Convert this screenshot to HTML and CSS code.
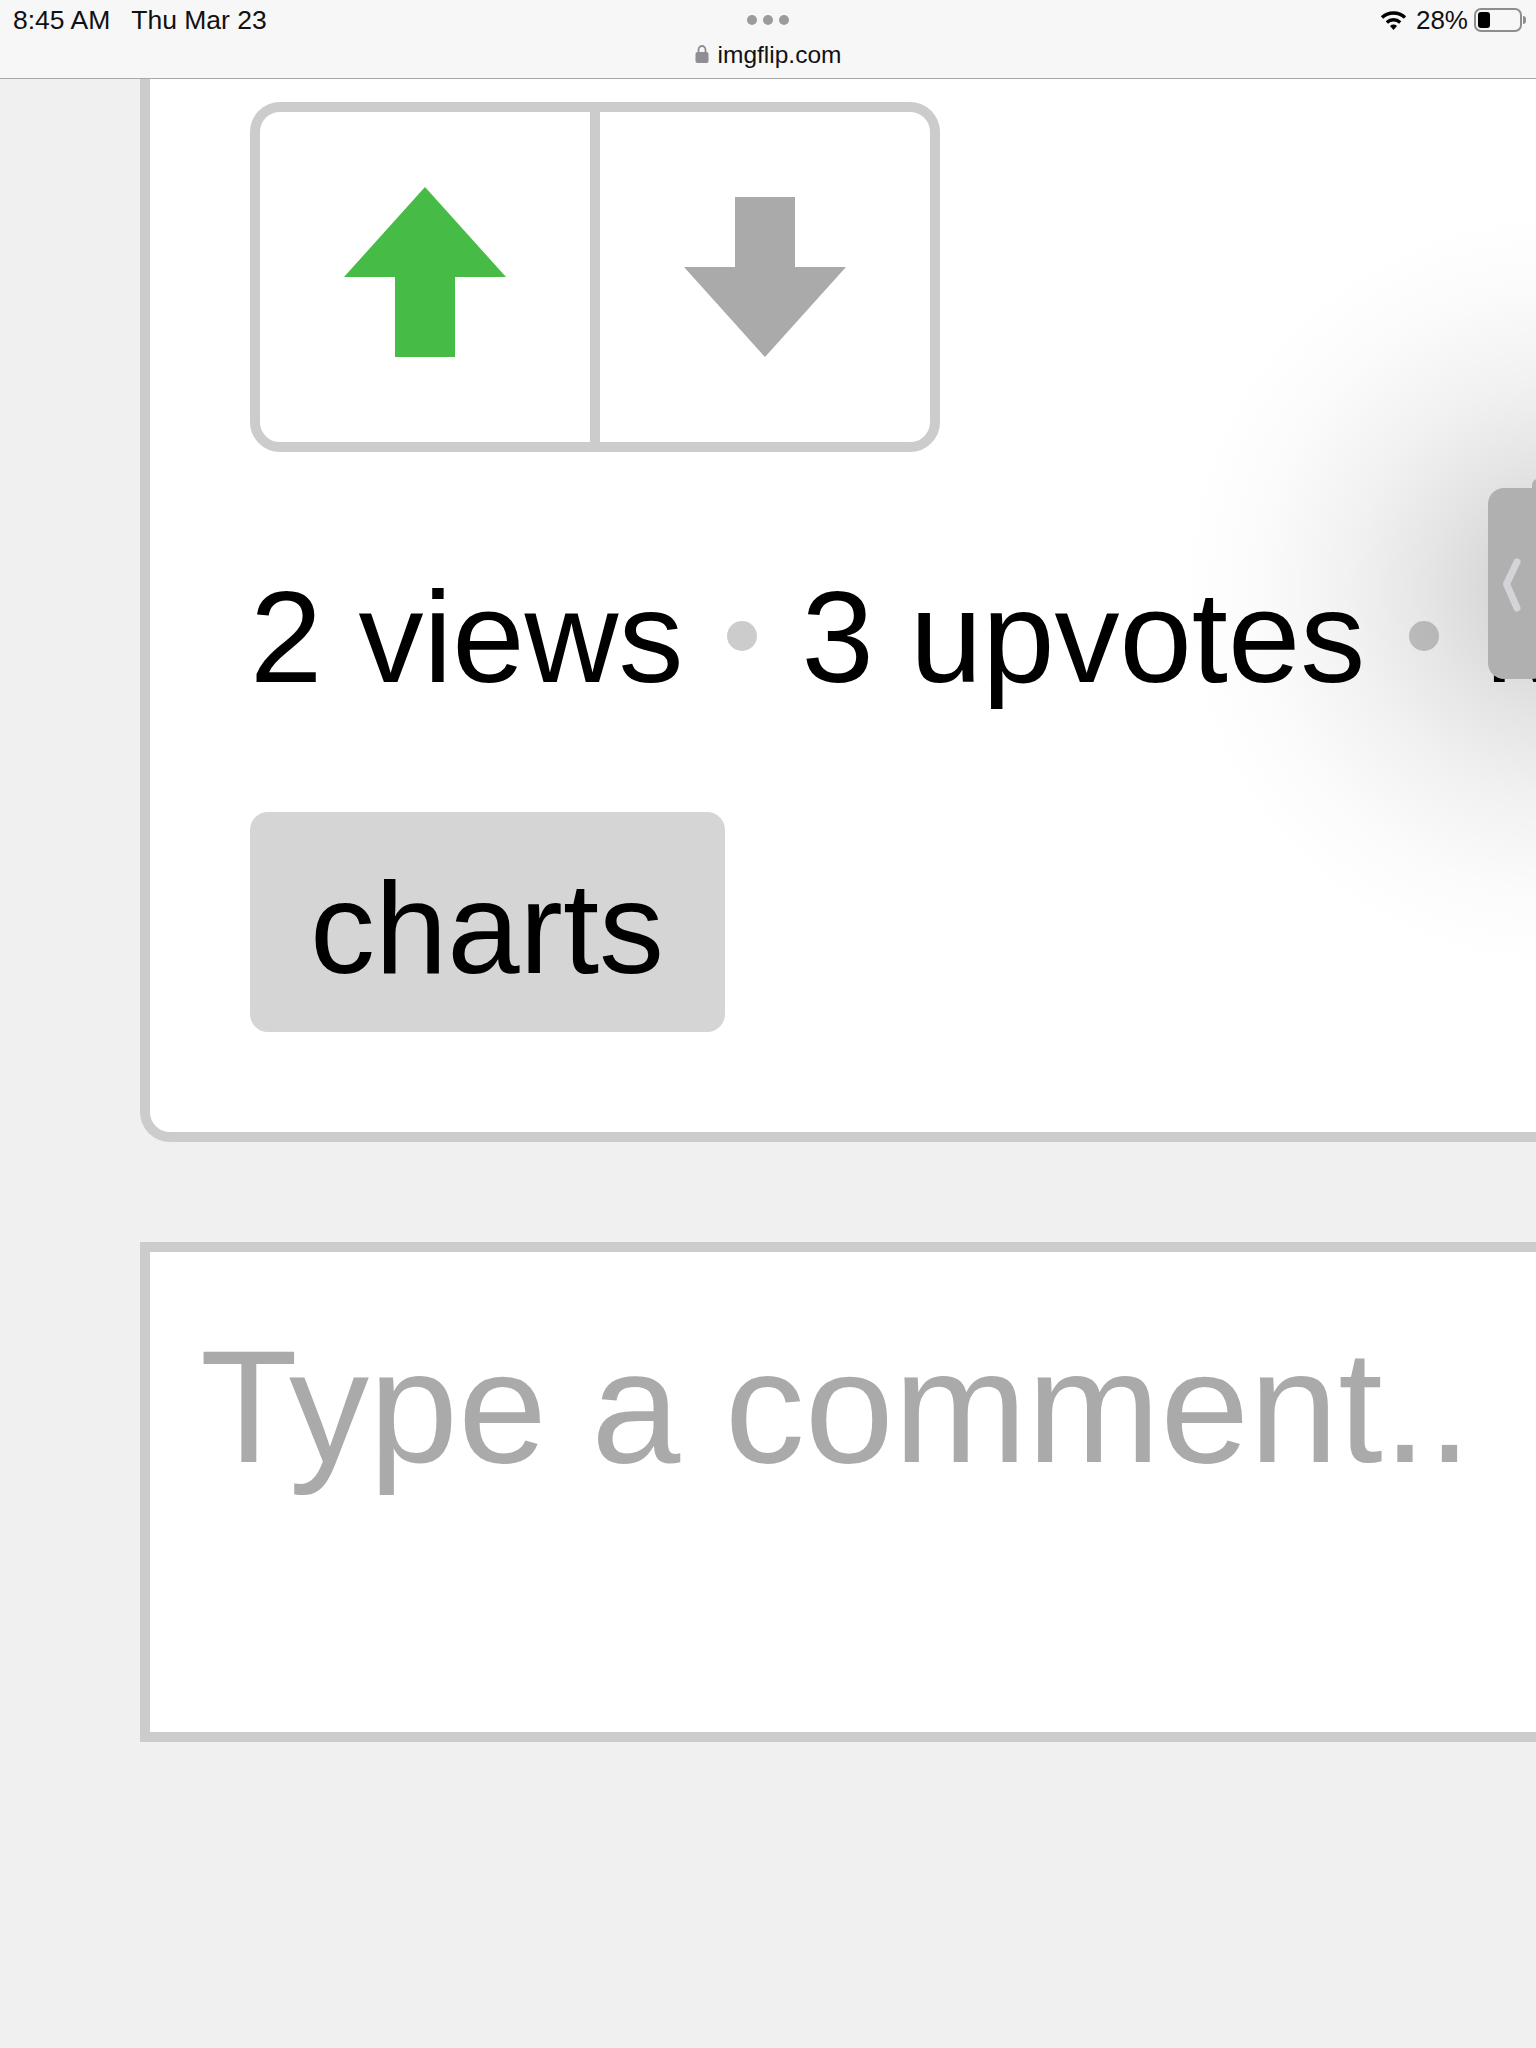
FILE: index.html
```html
<!DOCTYPE html>
<html lang="en">
<head>
    <meta charset="UTF-8">
    <title>imgflip.com</title>
    <link rel="stylesheet" href="styles.css">
</head>
<body>
    <div class="status-bar">
        <div class="status-row">
            <div class="status-time"><span>8:45 AM</span><span>Thu Mar 23</span></div>
            <div class="status-dots"><i></i><i></i><i></i></div>
            <div class="status-right">
                <svg class="wifi" width="27" height="20" viewBox="0 0 27 20">
                    <path d="M2 7.500a17 17 0 0 1 23 0" fill="none" stroke="#000" stroke-width="3.400"/>
                    <path d="M6.800 12.400a10 10 0 0 1 13.400 0" fill="none" stroke="#000" stroke-width="3.400"/>
                    <path d="M10 16a5.500 5.500 0 0 1 7 0l-3.500 4z"/>
                </svg>
                <span>28%</span>
                <div class="battery"><div class="battery-level"></div></div>
                <div class="battery-tip"></div>
            </div>
        </div>
        <div class="url-row">
            <svg class="lock" width="14" height="18" viewBox="0 0 14 18">
                <path d="M3.500 8V4.500a3.500 3.500 0 0 1 7 0V8" fill="none" stroke="#8e8e93" stroke-width="1.800"/>
                <rect x="0.500" y="7" width="13" height="11" rx="2" fill="#8e8e93"/>
            </svg>
            <span>imgflip.com</span>
        </div>
    </div>

    <div class="page">
        <section class="card">
            <div class="vote-box">
                <button class="vote-btn vote-up">
                    <svg width="162" height="170" viewBox="0 0 162 170"><polygon points="81,0 162,90 111,90 111,170 51,170 51,90 0,90"/></svg>
                </button>
                <button class="vote-btn vote-down">
                    <svg width="162" height="170" viewBox="0 0 162 170"><polygon points="51,10 111,10 111,80 162,80 81,170 0,80 51,80"/></svg>
                </button>
            </div>
            <div class="stats">
                <span>2 views</span><i class="dot"></i><span>3 upvotes</span><i class="dot"></i><span>Made by</span>
            </div>
            <div class="tags"><a class="tag">charts</a></div>
        </section>

        <div class="comment-box">Type a comment..</div>
    </div>

    <div class="side-glow"></div>
    <div class="side-handle">
        <svg width="20" height="58" viewBox="0 0 20 58"><path d="M15 6L4.500 28 15 52" fill="none" stroke="#d4d4d8" stroke-width="7" stroke-linecap="round" stroke-linejoin="round"/></svg>
    </div>
</body>
</html>
```

FILE: styles.css
```css
html, body {
    margin: 0;
    padding: 0;
}
body {
    width: 1536px;
    height: 2048px;
    overflow: hidden;
    position: relative;
    background-color: #f0f0f0;
    font-family: "Liberation Sans", Arial, sans-serif;
    color: #000;
}

/* ipad status bar + url */
.status-bar {
    position: relative;
    z-index: 2;
    height: 78px;
    background-color: #f7f7f7;
    border-bottom: 1px solid #a8a8a8;
    font-size: 26px;
    color: #111;
}
.status-row {
    height: 40px;
    padding: 0 0 0 13px;
    display: flex;
    align-items: center;
    justify-content: space-between;
}
.status-time {
    display: flex;
    gap: 21px;
    width: 487px;
    font-size: 26.500px;
}
.status-dots {
    display: flex;
    gap: 6px;
}
.status-dots i {
    width: 10px;
    height: 10px;
    border-radius: 50%;
    background-color: #9c9c9c;
}
.status-right {
    width: 500px;
    display: flex;
    align-items: center;
    justify-content: flex-end;
    gap: 6px;
    padding-right: 10px;
    box-sizing: border-box;
}
.wifi {
    margin-right: 3px;
}
.battery {
    width: 48px;
    height: 24px;
    box-sizing: border-box;
    border: 2px solid #8e8e8e;
    border-radius: 7px;
    padding: 2px;
}
.battery-level {
    width: 12px;
    height: 100%;
    background-color: #000;
    border-radius: 3px;
}
.battery-tip {
    width: 3px;
    height: 8px;
    margin-left: -5px;
    background-color: #8e8e8e;
    border-radius: 0 3px 3px 0;
}
.url-row {
    height: 30px;
    display: flex;
    align-items: center;
    justify-content: center;
    gap: 9px;
    font-size: 24.5px;
}
.lock {
    margin-top: -2px;
}

.page {
    padding-left: 140px;
}

.card {
    margin-top: -50px;
    box-sizing: border-box;
    background-color: #fff;
    border: 10px solid #ccc;
    border-right: 0;
    border-radius: 30px 0 0 30px;
    padding: 63px 0 100px 100px;
}
.vote-box {
    width: 690px;
    height: 350px;
    box-sizing: border-box;
    display: flex;
    border: 10px solid #ccc;
    border-radius: 30px;
}
.vote-btn {
    flex: 1;
    padding: 0 0 10px;
    border: 0;
    background: none;
    display: flex;
    align-items: center;
    justify-content: center;
}
.vote-up {
    border-right: 10px solid #ccc;
}
.vote-up svg {
    fill: #46bb46;
}
.vote-down svg {
    fill: #aaa;
}
.stats {
    margin-top: 115px;
    display: flex;
    align-items: center;
    white-space: nowrap;
    font-size: 130px;
    line-height: 140px;
}
.dot {
    flex-shrink: 0;
    width: 30px;
    height: 30px;
    margin: -2px 44px 0;
    border-radius: 50%;
    background-color: #ccc;
}
.tags {
    margin-top: 105px;
    height: 220px;
}
.tag {
    display: inline-block;
    padding: 12px 61px 0 60px;
    background-color: #d5d5d5;
    border-radius: 18px;
    font-size: 130px;
    line-height: 208px;
}

.comment-box {
    margin-top: 100px;
    height: 500px;
    box-sizing: border-box;
    background-color: #fff;
    border: 10px solid #ccc;
    border-right: 0;
    padding: 75px 0 0 50px;
    font-size: 160px;
    line-height: 160px;
    color: #aaa;
    white-space: nowrap;
}

/* floating side tab */
.side-glow {
    position: absolute;
    left: 1180px;
    top: 210px;
    width: 760px;
    height: 760px;
    border-radius: 50%;
    background: radial-gradient(closest-side, rgba(0,0,0,0.2), rgba(0,0,0,0.15) 19%, rgba(0,0,0,0.1) 35%, rgba(0,0,0,0.055) 55%, rgba(0,0,0,0.015) 80%, rgba(0,0,0,0) 100%);
}
.side-handle {
    position: absolute;
    left: 1488px;
    top: 488px;
    width: 60px;
    height: 191px;
    background-color: #b0b0b0;
    border-radius: 16px;
    padding: 68px 0 0 14px;
    box-sizing: border-box;
}
.side-handle::before {
    content: "";
    position: absolute;
    left: 44px;
    top: -9px;
    width: 16px;
    height: 14px;
    background-color: #b0b0b0;
    border-radius: 6px 0 0 0;
}
```
